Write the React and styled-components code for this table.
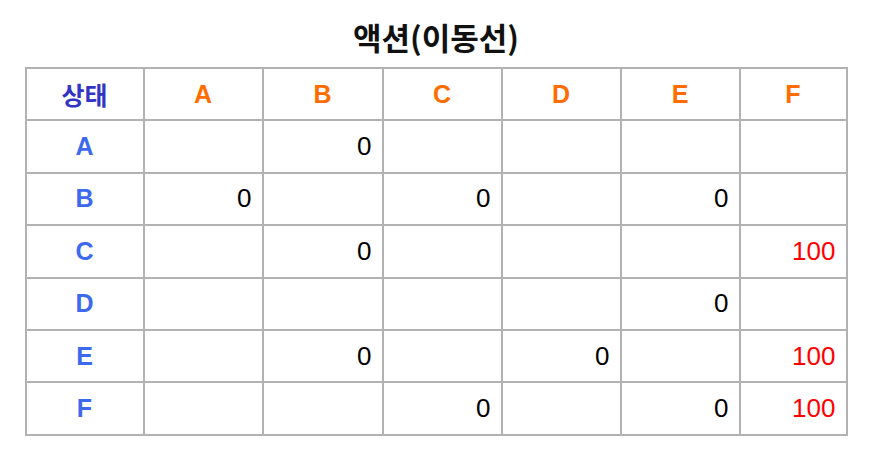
import React from 'react'
import styled, {createGlobalStyle} from 'styled-components'

const GlobalStyle = createGlobalStyle`
    html, body {
        margin: 0;
        padding: 0;
        background: #ffffff;
    }
    body {
        font-family: "Liberation Sans", Arial, "Noto Sans CJK KR", sans-serif;
    }
`;

const cols = ['A', 'B', 'C', 'D', 'E', 'F']
const widths = [118, 119, 120, 119, 119, 119, 107]

const rows = [
    {label: 'A', values: ['', '0', '', '', '', '']},
    {label: 'B', values: ['0', '', '0', '', '0', '']},
    {label: 'C', values: ['', '0', '', '', '', '100']},
    {label: 'D', values: ['', '', '', '', '0', '']},
    {label: 'E', values: ['', '0', '', '0', '', '100']},
    {label: 'F', values: ['', '', '0', '', '0', '100']},
]

export default function App() {
    return (
        <Page>
            <GlobalStyle/>
            <Title>액션(이동선)</Title>
            <Grid>
                <colgroup>
                    {widths.map((w, i) => <col key={i} style={{width: w}}/>)}
                </colgroup>
                <thead>
                    <tr>
                        <Corner>상태</Corner>
                        {cols.map(c => <ColHead key={c}>{c}</ColHead>)}
                    </tr>
                </thead>
                <tbody>
                    {rows.map(r => (
                        <tr key={r.label}>
                            <RowHead>{r.label}</RowHead>
                            {r.values.map((v, i) => (
                                <Cell key={i} $hot={v === '100'}>{v}</Cell>
                            ))}
                        </tr>
                    ))}
                </tbody>
            </Grid>
        </Page>
    )
}

const Page = styled.div`
    width: 872px;
    height: 457px;
    padding: 16px 25px 0 25px;
    box-sizing: border-box;
    display: flex;
    flex-direction: column;
    align-items: center;
`;

const Title = styled.h1`
    margin: 0 0 9px 0;
    height: 42px;
    line-height: 42px;
    font-family: "Noto Sans CJK KR", "Liberation Sans", sans-serif;
    font-size: 31px;
    font-weight: 700;
    color: #111;
`;

const Grid = styled.table`
    width: 821px;
    table-layout: fixed;
    border-collapse: collapse;
    border: 2px solid #b2b2b2;

    td, th {
        border: 2px solid #b2b2b2;
        height: 52.4px;
        padding: 0 10px;
        box-sizing: border-box;
    }
`;

const Corner = styled.th`
    text-align: center;
    font-family: "Noto Sans CJK KR", sans-serif;
    font-size: 25px;
    font-weight: 700;
    color: #3434c4;
`;

const ColHead = styled.th`
    text-align: center;
    font-size: 25px;
    font-weight: 700;
    color: #ff6d01;
`;

const RowHead = styled.td`
    text-align: center;
    font-size: 25px;
    font-weight: 700;
    color: #3d69ee;
`;

const Cell = styled.td`
    text-align: right;
    font-size: 26px;
    color: ${p => p.$hot ? '#ff0000' : '#000000'};
`;
